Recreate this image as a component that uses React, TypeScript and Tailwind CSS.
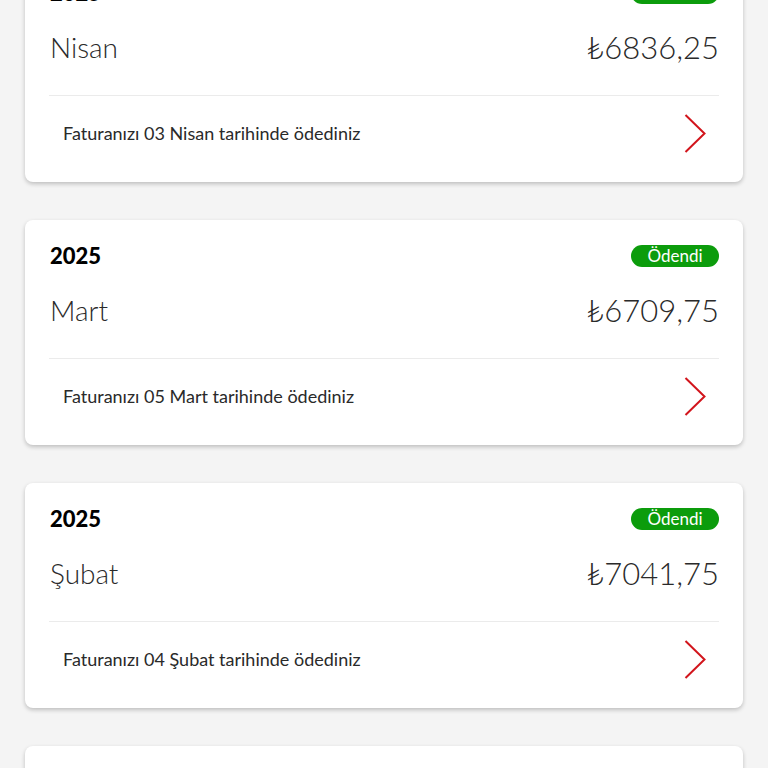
import React from "react";

type Bill = { year: string; month: string; amount: string; note: string };

const bills: Bill[] = [
  { year: "2025", month: "Nisan", amount: "₺6836,25", note: "Faturanızı 03 Nisan tarihinde ödediniz" },
  { year: "2025", month: "Mart", amount: "₺6709,75", note: "Faturanızı 05 Mart tarihinde ödediniz" },
  { year: "2025", month: "Şubat", amount: "₺7041,75", note: "Faturanızı 04 Şubat tarihinde ödediniz" },
  { year: "2025", month: "Ocak", amount: "₺6512,50", note: "Faturanızı 03 Ocak tarihinde ödediniz" },
];

function Chevron() {
  return (
    <svg width="22" height="39" viewBox="0 0 22 39" fill="none">
      <polyline points="1.5,1 20.5,19.5 1.5,38" stroke="#d2151c" strokeWidth="2" strokeLinejoin="miter" />
    </svg>
  );
}

function Card({ b }: { b: Bill }) {
  return (
    <div className="bg-white rounded-[8px] shadow-[0_2px_4px_rgba(0,0,0,0.22)] px-[24px] pt-[25px] pb-[29px] shrink-0">
      <div className="flex items-center justify-between h-[22px]">
        <span className="pl-[1px] text-[22px] font-black text-black leading-none">{b.year}</span>
        <span className="h-[22px] w-[88px] rounded-full bg-[#0c9c0c] text-white text-[17px] leading-[22px] text-center">
          Ödendi
        </span>
      </div>
      <div className="mt-[25px] flex items-center justify-between h-[36px]">
        <span className="pl-[1px] text-[28px] font-light text-[#2a2a2a] leading-none">{b.month}</span>
        <span className="text-[31px] font-light text-[#2a2a2a] leading-none">{b.amount}</span>
      </div>
      <div className="mt-[30px] border-t border-[#ebebeb]" />
      <div className="pt-[18px] flex items-center justify-between pl-[14px] pr-[13px]">
        <span className="text-[18px] font-normal text-[#2a2a2a]">{b.note}</span>
        <Chevron />
      </div>
    </div>
  );
}

export default function App() {
  return (
    <div
      className="w-[768px] h-[768px] overflow-hidden bg-[#f4f4f4]"
      style={{ fontFamily: 'Lato, "Noto Sans", sans-serif' }}
    >
      <div className="px-[25px] -mt-[43px] flex flex-col gap-[38px]">
        {bills.map((b) => (
          <Card key={b.month} b={b} />
        ))}
      </div>
    </div>
  );
}
